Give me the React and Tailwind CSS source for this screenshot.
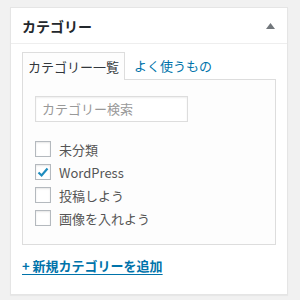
const FONT = { fontFamily: '"Noto Sans CJK JP", "Noto Sans", sans-serif' };

const cats = [
  { name: "未分類", checked: false },
  { name: "WordPress", checked: true },
  { name: "投稿しよう", checked: false },
  { name: "画像を入れよう", checked: false },
];

function Check({ checked }) {
  return (
    <span className="flex h-4 w-4 shrink-0 items-center justify-center border border-[#b4b9be] bg-white shadow-[inset_0_1px_2px_rgba(0,0,0,0.1)]">
      {checked && (
        <svg width="14" height="14" viewBox="0 0 14 14">
          <path d="M2.5 7.5 L5.6 10.5 L11.5 3.5" fill="none" stroke="#1e8cbe" strokeWidth="2.2" />
        </svg>
      )}
    </span>
  );
}

export default function App() {
  return (
    <div className="h-[300px] w-[300px] bg-[#f1f1f1] pl-[10px] pt-[7px]" style={FONT}>
      <div className="flex h-[288px] w-[278px] flex-col border border-[#e5e5e5] bg-white shadow-[0_1px_1px_rgba(0,0,0,0.04)]">
        {/* header */}
        <div className="flex h-[36px] shrink-0 items-center justify-between border-b border-[#eee] pl-[11px] pr-[12px]">
          <h2 className="text-[14px] font-bold leading-none text-[#23282d]">カテゴリー</h2>
          <svg width="9" height="6" viewBox="0 0 9 6" className="mt-[1px]">
            <path d="M0 6 L4.5 0 L9 6 Z" fill="#72777c" />
          </svg>
        </div>

        <div className="px-[11px] pt-[8px]">
          {/* tabs */}
          <div className="flex items-end">
            <div className="relative -mb-px flex h-[28px] items-center border border-b-0 border-[#ddd] bg-[#fdfdfd] px-[5px] text-[13px] text-[#32373c]">
              カテゴリー一覧
            </div>
            <span className="ml-[9px] flex h-[27px] items-center text-[13px] text-[#0073aa]">よく使うもの</span>
          </div>

          {/* panel */}
          <div className="h-[166px] border border-[#ddd] bg-[#fdfdfd] pl-[12px] pt-[16px]">
            <div className="flex h-[26px] w-[153px] items-center border border-[#ddd] bg-white px-[6px] text-[13px] text-[#999] shadow-[inset_0_1px_2px_rgba(0,0,0,0.07)]">
              カテゴリー検索
            </div>
            <ul className="mt-[19px] flex flex-col gap-[7px]">
              {cats.map((c) => (
                <li key={c.name} className="flex h-[16px] items-center gap-[8px] text-[13px] text-[#555]">
                  <Check checked={c.checked} />
                  <span className="leading-none">{c.name}</span>
                </li>
              ))}
            </ul>
          </div>

          <a className="mt-[11px] inline-block text-[13px] font-semibold leading-[20px] text-[#0073aa] underline underline-offset-[3px]">
            + 新規カテゴリーを追加
          </a>
        </div>
      </div>
    </div>
  );
}
